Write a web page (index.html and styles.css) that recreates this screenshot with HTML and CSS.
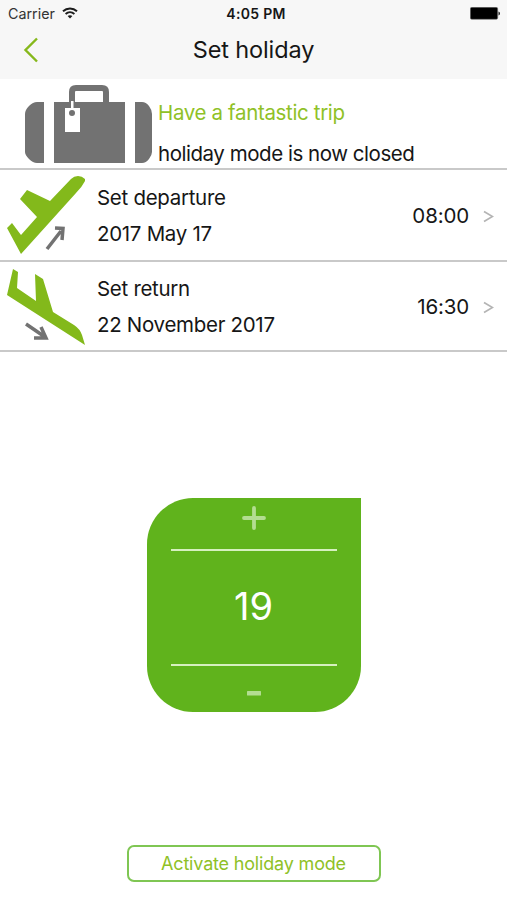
FILE: index.html
```html
<!DOCTYPE html>
<html lang="en">
<head>
<meta charset="utf-8">
<title>Set holiday</title>
<link rel="stylesheet" href="styles.css">
</head>
<body>
<div class="screen">
  <header class="header">
    <div class="status">
      <div class="carrier"><span class="carrier-name">Carrier</span>
        <svg class="wifi" width="16" height="12" viewBox="0 0 16 12" fill="none" stroke="#1c1c1c" stroke-width="1.9"><path d="M1 4.300C5 .5 11 .5 15 4.300M3.600 7C6.200 4.700 9.800 4.700 12.400 7"/><path d="M8 11.500 5.600 9.100C7 7.900 9 7.900 10.400 9.100Z" fill="#1c1c1c" stroke="none"/></svg>
      </div>
      <div class="clock">4:05 PM</div>
      <svg class="battery" width="31" height="13" viewBox="0 0 31 13"><rect x=".3" y=".3" width="27.400" height="12" rx="1.500" fill="#000" stroke="#777" stroke-width=".6"/><path d="M28.500 4.500Q30 5 30 6.500T28.500 8.500Z" fill="#222"/></svg>
    </div>
    <div class="nav">
      <svg class="back" width="16" height="26" viewBox="0 0 16 26" fill="none" stroke="#86b81b" stroke-width="2.400"><path d="M14 1.500 2.500 13 14 24.500"/></svg>
      <h1 class="title">Set holiday</h1>
    </div>
  </header>
  <section class="banner">
    <svg class="case" width="130" height="80" viewBox="0 0 130 80" fill="#727272"><path d="M20 17V78H13Q9 78 5 74T1 67V29Q1 25 5 21T13 17ZM111 17V78H118Q122 78 125 74T128 67V29Q128 25 125 21T118 17ZM30 17H101V78H30Z"/><path d="M48 18V7Q48 3 52 3H78Q82 3 82 7V18" fill="none" stroke="#727272" stroke-width="6"/><path d="M47 16H49.500V23H56V47H41V23H47Z" fill="#fff"/><circle cx="48" cy="28" r="3"/></svg>
    <div class="banner-text">
      <p class="wish">Have a fantastic trip</p>
      <p class="mode">holiday mode is now closed</p>
    </div>
  </section>
  <section class="row row-departure">
    <svg class="plane" width="85" height="90" viewBox="0 0 85 90"><path d="M21 84 7 58 12 53 21 65 37 47 20 29 27 20 50 31 71 9Q74 6 78 6T85 9V11Q82 17 76 23Z" fill="#83b91b"/><path d="M47 79 61 61M55 58 63 58.500 62 70" fill="none" stroke="#727272" stroke-width="3.500"/></svg>
    <div class="info"><p class="name">Set departure</p><p class="date">2017 May 17</p></div>
    <div class="time">08:00</div>
    <svg class="chevron" width="11" height="13" viewBox="0 0 11 13" fill="none" stroke="#b4b4b4" stroke-width="1.700"><path d="M1 1.500 9.500 6.500 1 11.500"/></svg>
  </section>
  <section class="row row-return">
    <svg class="plane" width="85" height="90" viewBox="0 0 85 90"><path d="M7 34 13 8 18 11 17 27 36 40 35 13 43 18 53 51 74 64Q80 68 82 74L85 84Z" fill="#83b91b"/><path d="M26 63 45 76M41 66 46 77 34 77" fill="none" stroke="#727272" stroke-width="3.500"/></svg>
    <div class="info"><p class="name">Set return</p><p class="date">22 November 2017</p></div>
    <div class="time">16:30</div>
    <svg class="chevron" width="11" height="13" viewBox="0 0 11 13" fill="none" stroke="#b4b4b4" stroke-width="1.700"><path d="M1 1.500 9.500 6.500 1 11.500"/></svg>
  </section>
  <main class="main">
    <div class="stepper">
      <svg class="plus" width="24" height="24" viewBox="0 0 24 24" stroke="#b3dd91" stroke-width="3.800" stroke-linecap="round"><path d="M2 12H22M12 2V22"/></svg>
      <div class="value">19</div>
      <svg class="minus" width="14" height="5" viewBox="0 0 14 5"><rect width="14" height="4.500" rx=".5" fill="#b3dd91"/></svg>
    </div>
  </main>
  <button class="activate"><span>Activate holiday mode</span></button>
</div>
</body>
</html>
```
FILE: styles.css
```css
* { box-sizing: border-box; }
body { margin: 0; font-family: Inter, "Liberation Sans", sans-serif; color: #161616; background: #fff; }
p, h1 { margin: 0; font-weight: 400; white-space: nowrap; }
svg { display: block; flex: none; }
.screen { width: 507px; height: 900px; display: flex; flex-direction: column; overflow: hidden; }

.header { height: 79px; background: #f7f7f7; flex: none; }
.status { height: 27px; display: grid; grid-template-columns: 1fr auto 1fr; align-items: center; padding: 0 6px 0 8px; }
.carrier { display: flex; align-items: center; gap: 6px; font-size: 14.3px; color: #333; }
.carrier-name { width: 48px; }
.wifi { margin-top: -2px; }
.clock { font-size: 14px; font-weight: 600; letter-spacing: .3px; margin-left: 3px; }
.battery { justify-self: end; }
.nav { display: grid; grid-template-columns: 40px 1fr 40px; align-items: center; height: 45px; }
.back { margin-left: 23px; }
.title { font-size: 23.5px; letter-spacing: -.12px; text-align: center; }

.banner { height: 91px; flex: none; display: flex; border-bottom: 2px solid #c9c9c9; padding: 6px 0 0 24px; }
.banner-text { margin-left: 4px; padding-top: 7px; font-size: 20.5px; letter-spacing: -.46px; line-height: 41px; }
.wish { color: #8fc127; letter-spacing: -.35px; }

.row { height: 92px; flex: none; display: flex; align-items: center; border-bottom: 2px solid #c9c9c9; padding-right: 13px; }
.row-return { height: 90px; }
.plane { width: 85px; }
.info { margin-left: 12px; padding-top: 2px; font-size: 20.5px; letter-spacing: -.3px; line-height: 36px; }
.time { margin-left: auto; margin-right: 14px; font-size: 20.5px; letter-spacing: -.15px; padding-top: 1px; }
.chevron { margin-top: 2px; }

.main { flex: 1; display: flex; justify-content: center; padding-top: 146px; }
.stepper { width: 214px; height: 214px; border-radius: 46px 0 46px 46px; background: #60b31c; display: flex; flex-direction: column; align-items: center; padding: 8px 24px 0; }
.value { width: 166px; height: 117px; margin-top: 19px; border: solid #d6f0bf; border-width: 2px 0; color: #fff; font-size: 38px; font-weight: 370; display: flex; align-items: center; justify-content: center; padding-bottom: 3px; }
.minus { margin-top: 25px; }
.activate { width: 254px; height: 37px; margin: 0 auto 18px; flex: none; border: 2px solid #7fc653; border-radius: 7px; background: #fff; color: #8fc127; font: 400 18px Inter, sans-serif; letter-spacing: -.18px; padding: 0; white-space: nowrap; }
```
